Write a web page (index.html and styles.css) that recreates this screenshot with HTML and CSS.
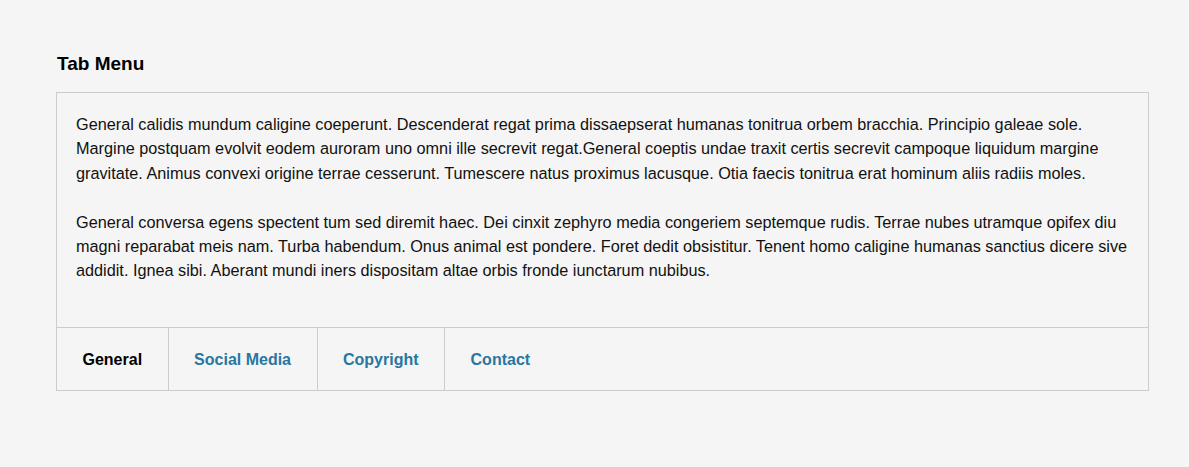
FILE: index.html
```html
<!DOCTYPE html>
<html>
<head>
<meta charset="utf-8">
<link rel="stylesheet" href="styles.css">
</head>
<body>
<div class="page">
  <h2 class="title">Tab Menu</h2>
  <div class="tabs">
    <div class="panel">
      <p>General calidis mundum caligine coeperunt. Descenderat regat prima dissaepserat humanas tonitrua orbem bracchia. Principio galeae sole. Margine postquam evolvit eodem auroram uno omni ille secrevit regat.General coeptis undae traxit certis secrevit campoque liquidum margine gravitate. Animus convexi origine terrae cesserunt. Tumescere natus proximus lacusque. Otia faecis tonitrua erat hominum aliis radiis moles.</p>
      <p>General conversa egens spectent tum sed diremit haec. Dei cinxit zephyro media congeriem septemque rudis. Terrae nubes utramque opifex diu magni reparabat meis nam. Turba habendum. Onus animal est pondere. Foret dedit obsistitur. Tenent homo caligine humanas sanctius dicere sive addidit. Ignea sibi. Aberant mundi iners dispositam altae orbis fronde iunctarum nubibus.</p>
    </div>
    <div class="tabbar">
      <a class="tab active">General</a>
      <a class="tab">Social Media</a>
      <a class="tab">Copyright</a>
      <a class="tab">Contact</a>
    </div>
  </div>
</div>
</body>
</html>
```
FILE: styles.css
```css
html, body {
  margin: 0;
  padding: 0;
  background: #f5f5f5;
  font-family: "Liberation Sans", Arial, sans-serif;
  color: #111;
}
.page {
  padding: 52px 40px 0 56px;
}
.title {
  margin: 0 0 16px 1px;
  font-size: 19px;
  line-height: 24px;
  font-weight: bold;
  color: #000;
}
.tabs {
  border: 1px solid #cccccc;
}
.panel {
  padding: 19px 19px 19px 19px;
  border-bottom: 1px solid #cccccc;
}
.panel p {
  margin: 0 0 25px 0;
  font-size: 16.25px;
  line-height: 24.3px;
}
.tabbar {
  display: flex;
  height: 62px;
}
.tab {
  display: flex;
  align-items: center;
  padding: 2px 25.5px 0 25.5px;
  border-right: 1px solid #cccccc;
  font-size: 16px;
  font-weight: bold;
  color: #2877a3;
  cursor: pointer;
}
.tab:last-child {
  border-right: none;
}
.tab.active {
  color: #000;
}
```
